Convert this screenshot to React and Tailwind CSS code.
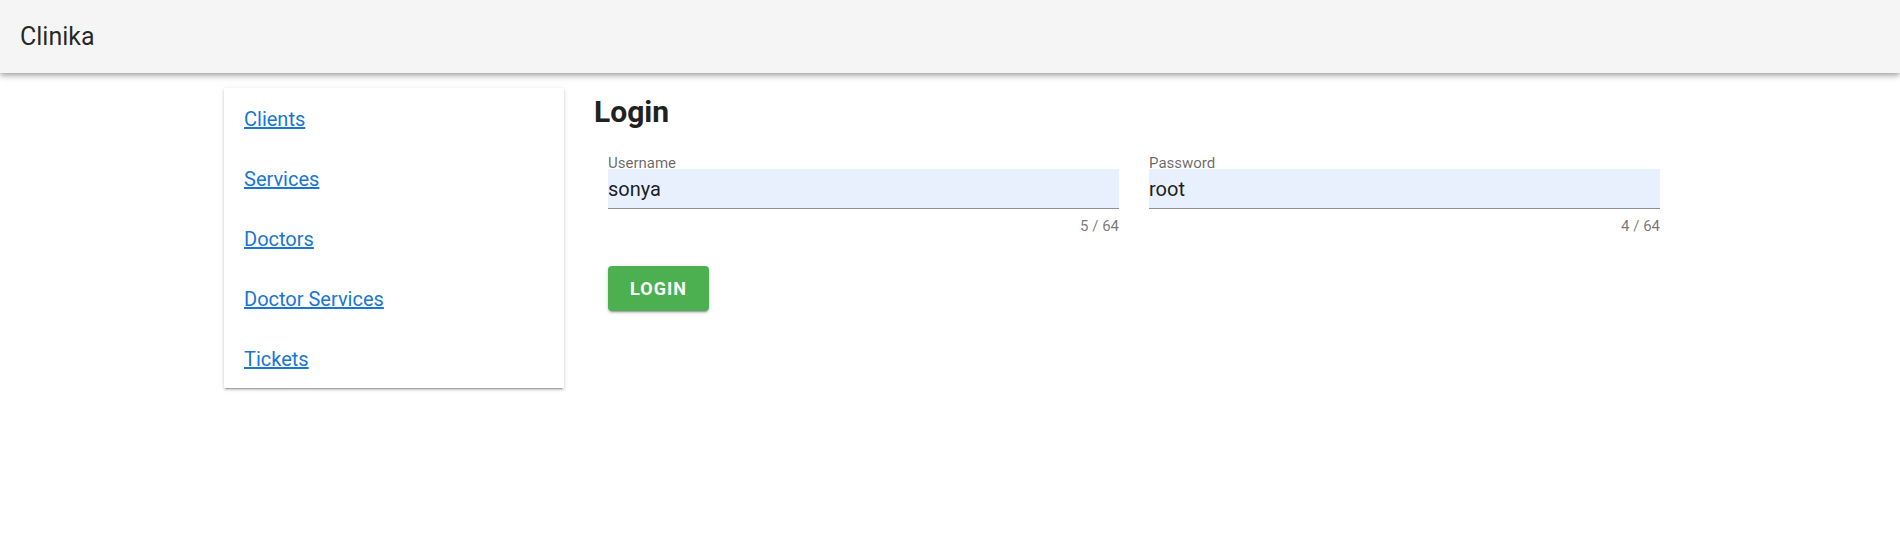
import React from 'react';

const links = ['Clients', 'Services', 'Doctors', 'Doctor Services', 'Tickets'];

const Field = ({ label, value, count }) => (
  <div className="flex flex-col">
    <label className="text-[15px] leading-4 text-black/60">{label}</label>
    <div className="mt-[-2px] h-[40px] bg-[#e8f0fe] border-b border-[#8d9097] flex items-center">
      <span className="text-[20px] text-black/90">{value}</span>
    </div>
    <div className="mt-[9px] text-right text-[15px] leading-4 text-black/55">{count} / 64</div>
  </div>
);

export default function App() {
  return (
    <div className="min-h-[547px] bg-white font-['Roboto',sans-serif]">
      {/* app bar */}
      <header className="h-[73px] bg-[#f5f5f5] flex items-center pl-[20px] shadow-[0_2px_4px_-1px_rgba(0,0,0,0.2),0_4px_5px_0_rgba(0,0,0,0.14),0_1px_10px_0_rgba(0,0,0,0.12)] relative z-10">
        <span className="text-[25px] text-black/85">Clinika</span>
      </header>

      <div className="flex pl-[224px] pt-[15px] gap-[30px]">
        {/* nav card */}
        <nav className="w-[340px] h-[300px] bg-white shadow-[0_3px_1px_-2px_rgba(0,0,0,0.2),0_2px_2px_0_rgba(0,0,0,0.14),0_1px_5px_0_rgba(0,0,0,0.12)] flex flex-col gap-[36px] pt-[19px] pl-[20px]">
          {links.map((l) => (
            <a key={l} href="#" className="text-[20px] leading-6 text-[#1976d2] underline w-fit">
              {l}
            </a>
          ))}
        </nav>

        {/* main */}
        <main className="w-[1080px]">
          <h1 className="mt-[6px] text-[30px] leading-[36px] font-bold text-[#212121]">Login</h1>
          <div className="mt-[25px] px-[14px] grid grid-cols-2 gap-[30px]">
            <Field label="Username" value="sonya" count={5} />
            <Field label="Password" value="root" count={4} />
          </div>
          <div className="px-[14px] mt-[32px]">
            <button className="w-[101px] h-[45px] rounded-[4px] bg-[#4caf50] text-white text-[18px] font-bold tracking-[1px] shadow-[0_3px_1px_-2px_rgba(0,0,0,0.2),0_2px_2px_0_rgba(0,0,0,0.14),0_1px_5px_0_rgba(0,0,0,0.12)]">
              LOGIN
            </button>
          </div>
        </main>
      </div>
    </div>
  );
}
